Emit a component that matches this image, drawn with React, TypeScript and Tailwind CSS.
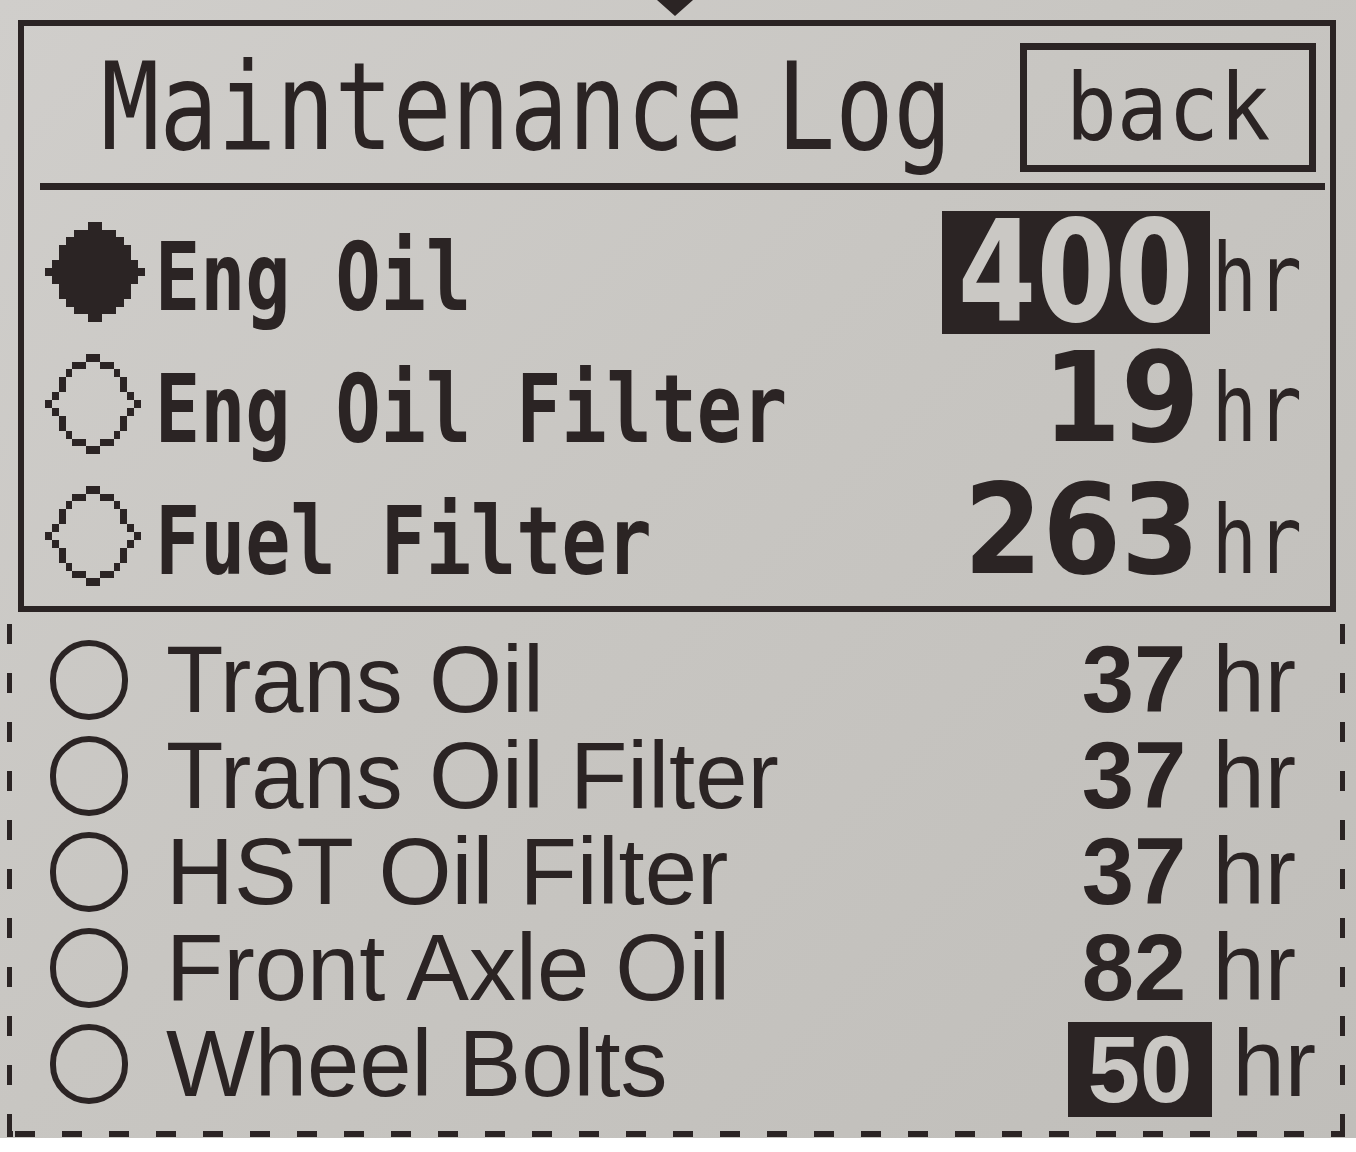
import React from "react";

// Pixel-style LCD rows shown in the solid frame
type LcdItem = { label: string; hours: string; selected: boolean; editing?: boolean };

const lcdItems: LcdItem[] = [
  { label: "Eng Oil", hours: "400", selected: true, editing: true },
  { label: "Eng Oil Filter", hours: "19", selected: false },
  { label: "Fuel Filter", hours: "263", selected: false },
];

// Items continued below the screen, in the dashed frame
type ListItem = { label: string; hours: string; highlight?: boolean };

const listItems: ListItem[] = [
  { label: "Trans Oil", hours: "37" },
  { label: "Trans Oil Filter", hours: "37" },
  { label: "HST Oil Filter", hours: "37" },
  { label: "Front Axle Oil", hours: "82" },
  { label: "Wheel Bolts", hours: "50", highlight: true },
];

// Each row of the pixel circle: [left col, right col, segment width]
const RING: [number, number, number][] = [
  [6, 7, 2],
  [4, 9, 2],
  [3, 10, 1],
  [2, 11, 1],
  [2, 11, 1],
  [1, 12, 1],
  [0, 13, 1],
  [1, 12, 1],
  [2, 11, 1],
  [2, 11, 1],
  [3, 10, 1],
  [4, 9, 2],
  [6, 7, 2],
];

function PixelRadio({ filled }: { filled: boolean }) {
  return (
    <svg
      viewBox="0 0 14 13"
      preserveAspectRatio="none"
      shapeRendering="crispEdges"
      className={filled ? "w-[100px] h-[100px] shrink-0" : "w-[96px] h-[100px] shrink-0"}
    >
      {RING.map(([l, r, s], y) =>
        filled ? (
          <rect key={y} x={l} y={y} width={r - l + 1} height={1} fill="#2b2424" />
        ) : (
          <g key={y} fill="#2b2424">
            <rect x={l} y={y} width={s} height={1} />
            <rect x={r - s + 1} y={y} width={s} height={1} />
          </g>
        )
      )}
    </svg>
  );
}

function LcdRow({ item }: { item: LcdItem }) {
  return (
    <div className="flex items-center h-[132px] pl-[21px] pr-[28px]">
      <PixelRadio filled={item.selected} />
      <div className={item.selected ? "flex-1 ml-[10px]" : "flex-1 ml-[14px]"}>
        <span className="inline-block font-['DejaVu_Sans_Mono',monospace] font-bold text-[75px] leading-none scale-y-125 translate-y-[6px] whitespace-pre">
          {item.label}
        </span>
      </div>
      <div className="flex items-baseline">
        {item.editing ? (
          <div className="flex items-center h-[123px] px-[16px] bg-[#2b2424] mr-[2px]">
            <span className="inline-block font-['DejaVu_Sans',sans-serif] font-bold text-[113px] leading-[88px] text-[#cac8c4] scale-y-125">
              {item.hours}
            </span>
          </div>
        ) : (
          <span className="inline-block font-['DejaVu_Sans',sans-serif] font-bold text-[113px] leading-[92px] mr-[12px] scale-y-110 origin-[50%_95%]">
            {item.hours}
          </span>
        )}
        <span className="inline-block font-['DejaVu_Sans_Mono',monospace] text-[75px] leading-none scale-y-125 origin-[50%_85%]">
          hr
        </span>
      </div>
    </div>
  );
}

function ListRow({ item }: { item: ListItem }) {
  return (
    <div
      className={
        item.highlight
          ? "flex items-center h-[96px] pl-[38px] pr-[24px]"
          : "flex items-center h-[96px] pl-[38px] pr-[44px]"
      }
    >
      <div className="w-[78px] h-[80px] rounded-full border-[6px] border-[#2b2424] shrink-0" />
      <div className="flex-1 ml-[38px] leading-[96px]">{item.label}</div>
      <div className="flex items-baseline">
        {item.highlight ? (
          <span className="inline-block font-bold bg-[#2b2424] text-[#cac8c4] px-[20px] leading-[95px] translate-y-[6px]">
            {item.hours}
          </span>
        ) : (
          <span className="font-bold leading-[96px]">{item.hours}</span>
        )}
        <span className={item.highlight ? "ml-[20px] leading-[96px]" : "ml-[26px] leading-[96px]"}>hr</span>
      </div>
    </div>
  );
}

export default function App() {
  return (
    <div className="w-[1356px] h-[1152px] bg-white overflow-hidden">
      <div className="relative w-[1356px] h-[1138px] bg-[linear-gradient(135deg,#d0cecb_0%,#c8c6c2_45%,#c0beba_100%)] text-[#2b2424] flex flex-col pt-[20px]">
        {/* pointer from the previous screen */}
        <div className="absolute left-[657px] top-0 w-0 h-0 border-l-[18px] border-r-[18px] border-t-[16px] border-l-transparent border-r-transparent border-t-[#2b2424]" />

        {/* LCD screen */}
        <div className="ml-[18px] w-[1318px] border-[6px] border-[#2b2424] flex flex-col pb-[4px]">
          <div className="flex items-center justify-between h-[157px] pt-[6px] pl-[77px] pr-[14px]">
            <span className="inline-block font-['DejaVu_Sans_Mono',monospace] text-[97px] leading-none scale-y-125 [word-spacing:-25px]">
              Maintenance Log
            </span>
            <div className="w-[296px] h-[129px] border-[7px] border-[#2b2424] flex items-center justify-center">
              <span className="inline-block font-['DejaVu_Sans_Mono',monospace] text-[85px] leading-none scale-y-110">
                back
              </span>
            </div>
          </div>
          <div className="h-[7px] bg-[#2b2424] ml-[16px] mr-[5px]" />
          <div className="flex flex-col pt-[16px]">
            {lcdItems.map((item) => (
              <LcdRow key={item.label} item={item} />
            ))}
          </div>
        </div>

        {/* remaining items, dashed frame */}
        <div className="ml-[7px] w-[1338px] h-[525px] flex flex-col">
          <div className="flex flex-1">
            <div className="w-[5px] bg-[image:repeating-linear-gradient(to_bottom,transparent_0px,transparent_12px,#2b2424_12px,#2b2424_32px,transparent_32px,transparent_49px)]" />
            <div className="flex-1 flex flex-col pt-[20px] font-['Liberation_Sans',Arial,sans-serif] text-[94px]">
              {listItems.map((item) => (
                <ListRow key={item.label} item={item} />
              ))}
            </div>
            <div className="w-[5px] bg-[image:repeating-linear-gradient(to_bottom,transparent_0px,transparent_12px,#2b2424_12px,#2b2424_32px,transparent_32px,transparent_49px)]" />
          </div>
          <div className="h-[6px] bg-[image:repeating-linear-gradient(to_right,#2b2424_0px,#2b2424_20px,transparent_20px,transparent_47px)] bg-[position:8px_0]" />
        </div>
      </div>
    </div>
  );
}
